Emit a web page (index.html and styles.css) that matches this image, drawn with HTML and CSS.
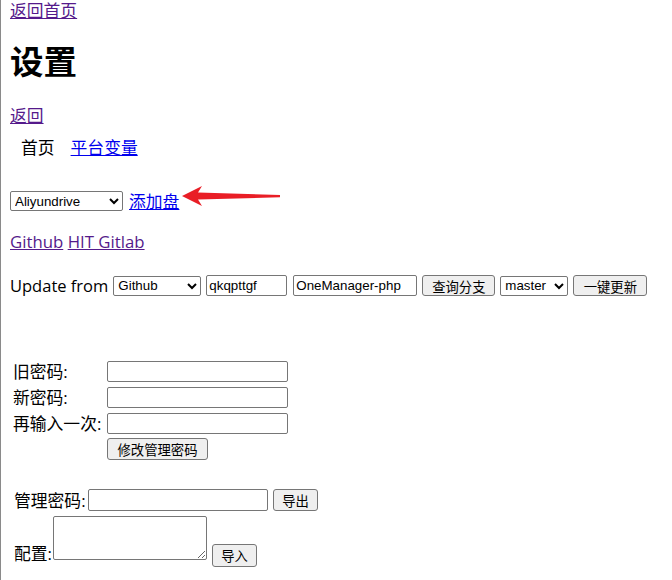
FILE: index.html
```html
<!DOCTYPE html>
<html lang="zh-CN">
<head>
  <meta charset="UTF-8" />
  <meta name="viewport" content="width=device-width, initial-scale=1.0" />
  <title>设置</title>
  <link rel="stylesheet" href="styles.css">
</head>
<body>

  <a href="#" class="visited top-link">返回首页</a>
  <h1>设置</h1>
  <a href="#" class="visited back-link">返回</a>

  <div class="tabs">
    <span class="tab current">首页</span>
    <a href="#" class="tab">平台变量</a>
  </div>

  <form class="disk-row">
    <select class="disk-select">
      <option>Aliyundrive</option>
      <option>Onedrive</option>
    </select>
    <a href="#">添加盘</a>
    <!-- red pointer arrow -->
    <svg class="pointer" width="100" height="24" viewBox="0 0 100 24">
      <path d="M1 12 L21 2 L17 8.5 L99 11 L99 13.3 L17 15.5 L21 22 Z" fill="#e91e26"/>
    </svg>
  </form>

  <div class="repo-links">
    <a href="#" class="visited">Github</a> <a href="#" class="visited">HIT Gitlab</a>
  </div>

  <form class="update-row">
    <span class="update-label">Update from</span>
    <select class="source-select">
      <option>Github</option>
      <option>HIT Gitlab</option>
    </select>
    <input type="text" class="user-input" value="qkqpttgf">
    <input type="text" class="project-input" value="OneManager-php">
    <button type="button" class="query-btn">查询分支</button>
    <select class="branch-select">
      <option>master</option>
    </select>
    <button type="button" class="update-btn">一键更新</button>
  </form>

  <form class="pass-form">
    <table>
      <tr>
        <td class="label-cell">旧密码:</td>
        <td><input type="password" class="pass-input"></td>
      </tr>
      <tr>
        <td class="label-cell">新密码:</td>
        <td><input type="password" class="pass-input"></td>
      </tr>
      <tr>
        <td class="label-cell">再输入一次:</td>
        <td><input type="password" class="pass-input"></td>
      </tr>
      <tr>
        <td></td>
        <td><button type="button" class="change-btn">修改管理密码</button></td>
      </tr>
    </table>
  </form>

  <form class="export-row">
    <span class="export-label">管理密码:</span>
    <input type="password" class="admin-input">
    <button type="button" class="small-btn">导出</button>
  </form>

  <form class="import-row">
    <span class="import-label">配置:</span>
    <textarea class="config-area"></textarea>
    <button type="button" class="small-btn import-btn">导入</button>
  </form>

</body>
</html>
```

FILE: styles.css
```css
html {
  min-height: 100%;
  border-left: 1px solid #8a8a8a;
  background-color: #fff;
}
body {
  margin: 0 8px 0 9px;
  font-family: "Open Sans", "Noto Sans CJK SC", sans-serif;
  font-size: 16.8px;
  line-height: 21px;
  color: #000;
}
a {
  color: #0000ee;
}
a.visited {
  color: #551a8b;
}
.top-link,
.back-link {
  display: inline-block;
}
h1 {
  font-size: 33.5px;
  line-height: 42px;
  margin: 19px 0 23px;
}
/* tab strip */
.tabs {
  display: flex;
  margin-top: 11px;
}
.tab.current {
  padding: 0 16px 0 11px;
}
/* form controls */
select,
input,
button,
textarea {
  font-family: "Liberation Sans", "Noto Sans CJK SC", sans-serif;
  font-size: 13.333px;
  box-sizing: border-box;
  margin: 0;
}
input,
textarea {
  border: 1px solid #767676;
  border-radius: 2px;
  padding: 1px 2px;
  height: 21px;
}
select {
  height: 20px;
  border: 1px solid #767676;
  border-radius: 2px;
  background-color: #fff;
}
button {
  height: 22px;
  border: 1px solid #767676;
  border-radius: 3px;
  background-color: #efefef;
  padding: 1px 6px;
}
.disk-row {
  display: flex;
  align-items: center;
  margin-top: 33px;
  height: 20px;
}
.disk-select {
  width: 113px;
  margin-right: 6px;
}
.pointer {
  align-self: flex-start;
  margin: -7px 0 0 2px;
}
.repo-links {
  margin-top: 20px;
  line-height: 22px;
}
.update-row {
  display: flex;
  align-items: center;
  gap: 5px;
  margin-top: 22px;
  height: 21px;
}
.update-label {
  font-size: 16.5px;
  margin-right: 0;
}
.source-select {
  width: 88px;
}
.user-input {
  width: 81px;
}
.project-input {
  width: 124px;
  margin-left: 1px;
}
.query-btn {
  width: 73px;
  height: 21px;
}
.branch-select {
  width: 68px;
}
.update-btn {
  width: 74px;
  height: 21px;
}
/* password table */
.pass-form table {
  margin-top: 61px;
  border-spacing: 2px;
}
.pass-form td {
  padding: 1px;
  height: 22px;
  vertical-align: middle;
}
.label-cell {
  width: 90px;
}
.pass-input {
  width: 181px;
  display: block;
}
.change-btn {
  width: 101px;
  display: block;
}
.export-row {
  display: flex;
  align-items: center;
  margin-top: 26px;
  padding-left: 4px;
}
.export-label {
  width: 74px;
}
.admin-input {
  width: 180px;
  height: 22px;
}
.small-btn {
  width: 45px;
  margin-left: 5px;
}
.import-row {
  display: flex;
  align-items: flex-start;
  margin-top: 5px;
  padding-left: 4px;
}
.import-label {
  width: 39px;
  margin-top: 27px;
}
.config-area {
  width: 154px;
  height: 44px;
  resize: both;
}
.import-btn {
  height: 23px;
  margin-top: 28px;
}
```
